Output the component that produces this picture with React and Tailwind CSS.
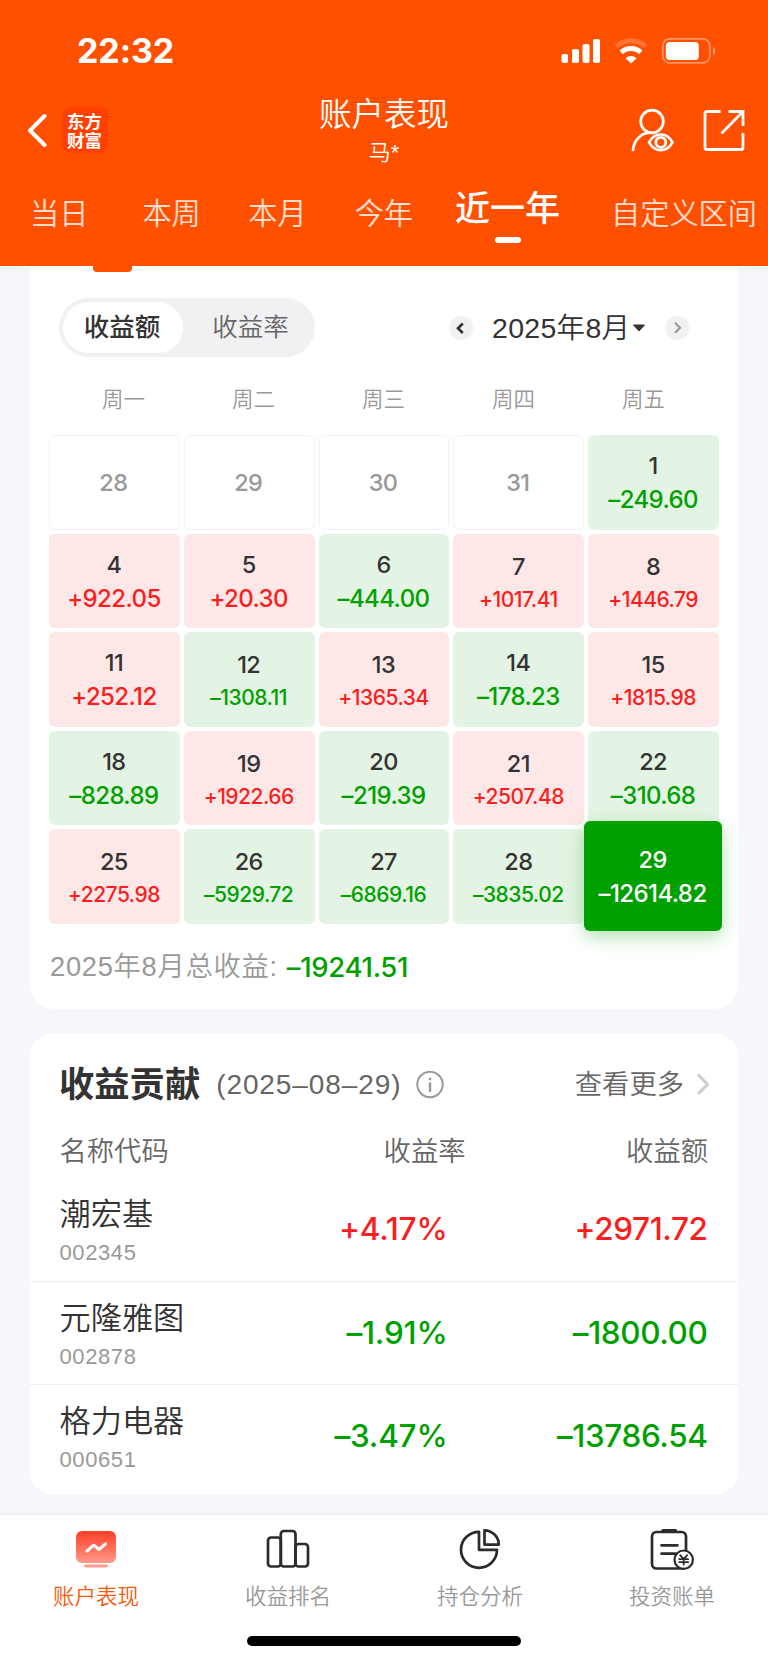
import clsx from 'clsx';

const periods = [
  { label: '当日', pad: 'ml-[30px]' },
  { label: '本周', pad: 'ml-[54px]' },
  { label: '本月', pad: 'ml-[47.500px]' },
  { label: '今年', pad: 'ml-[48px]' },
  { label: '近一年', pad: 'ml-[42px]', active: true },
  { label: '自定义区间', pad: 'ml-[51px]' },
];

const weekdays = ['周一', '周二', '周三', '周四', '周五'];

const days = [
  { day: 28 }, { day: 29 }, { day: 30 }, { day: 31 },
  { day: 1, value: -249.6 },
  { day: 4, value: 922.05 }, { day: 5, value: 20.3 }, { day: 6, value: -444 },
  { day: 7, value: 1017.41 }, { day: 8, value: 1446.79 },
  { day: 11, value: 252.12 }, { day: 12, value: -1308.11 }, { day: 13, value: 1365.34 },
  { day: 14, value: -178.23 }, { day: 15, value: 1815.98 },
  { day: 18, value: -828.89 }, { day: 19, value: 1922.66 }, { day: 20, value: -219.39 },
  { day: 21, value: 2507.48 }, { day: 22, value: -310.68 },
  { day: 25, value: 2275.98 }, { day: 26, value: -5929.72 }, { day: 27, value: -6869.16 },
  { day: 28, value: -3835.02 }, { day: 29, value: -12614.82, selected: true },
];

const stocks = [
  { name: '潮宏基', code: '002345', rate: 4.17, amount: 2971.72 },
  { name: '元隆雅图', code: '002878', rate: -1.91, amount: -1800 },
  { name: '格力电器', code: '000651', rate: -3.47, amount: -13786.54 },
];

const signed = (n) => `${n < 0 ? '–' : '+'}${Math.abs(n).toFixed(2)}`;

const StatusBar = () => (
  <div className="flex h-[102px] items-center pl-[77px] pr-[52px] text-white">
    <span className="font-['Inter'] text-[34px] font-bold leading-10 tracking-[-0.1px]">22:32</span>
    <svg className="ml-auto" width="155" height="26" viewBox="0 0 155 26" fill="#fff">
      <rect x="0.5" y="16" width="6.5" height="9" rx="2" />
      <rect x="11" y="11" width="7" height="14" rx="2" />
      <rect x="21.500" y="6" width="7" height="19" rx="2" />
      <rect x="32" y="1" width="7" height="24" rx="2" />
      <g fill="none" stroke="#fff" strokeWidth="5">
        <path d="M55.200 8.500a22 22 0 0 1 29.600 0" strokeOpacity="0.2" />
        <path d="M60.200 14.400a14.500 14.500 0 0 1 19.600 0" />
      </g>
      <path d="M64.500 20.200a8 8 0 0 1 11 0L70 25.600z" />
      <rect x="101.800" y="0.900" width="47" height="24" rx="7" fill="none" stroke="#fff" strokeOpacity="0.4" strokeWidth="1.700" />
      <rect x="104.800" y="4" width="33" height="18" rx="4" />
      <path d="M152 9v8c3-1.500 3-6.500 0-8z" fillOpacity="0.45" />
    </svg>
  </div>
);

const TitleBar = () => (
  <div className="grid h-[72px] grid-cols-[1fr_auto_1fr] text-white">
    <div className="flex items-start pl-[27px] pt-[5px]">
      <svg className="mt-[6px]" width="20" height="36" viewBox="0 0 20 36" fill="none" stroke="#fff" strokeWidth="4" strokeLinecap="round" strokeLinejoin="round">
        <path d="M17.500 3 3 17.500 17.500 32" />
      </svg>
      <div className="ml-[15px] flex h-[46px] w-[46px] items-center justify-center rounded-[9px] bg-[#ff4000]">
        <span className="w-[36px] break-all font-['Noto_Sans_CJK_SC',sans-serif] text-[17.500px] font-bold leading-[19.500px]">东方财富</span>
      </div>
    </div>
    <div className="flex flex-col items-center">
      <span className="mt-[-7px] text-[32.500px] leading-[40px]">账户表现</span>
      <span className="text-[22px] leading-[36px]">马*</span>
    </div>
    <div className="flex items-start justify-end pr-[23px] pt-[6px]">
      <svg width="44" height="46" viewBox="0 0 44 46" fill="none" stroke="#fff" strokeWidth="2.700" strokeLinecap="round">
        <circle cx="21" cy="13.500" r="11.300" />
        <path d="M2 42C3 31 11 24.500 20 24.700" />
        <path d="M18 34.300c6-10.400 17.500-10.400 23.500 0-6 10.400-17.500 10.400-23.500 0z" strokeLinejoin="round" />
        <circle cx="29.800" cy="34.300" r="5" />
      </svg>
      <svg className="ml-[28px]" width="42" height="44" viewBox="0 0 42 44" fill="none" stroke="#fff" strokeWidth="2.800" strokeLinecap="butt">
        <path d="M17.500 3.500H4a2 2 0 0 0-2 2v34a2 2 0 0 0 2 2h34a2 2 0 0 0 2-2V25" />
        <path d="M25.500 3.500H40V18M39.500 4 18.500 25.500" />
      </svg>
    </div>
  </div>
);

const PeriodTabs = () => (
  <div className="flex h-[92px] whitespace-nowrap text-white">
    {periods.map(({ label, pad, active }) => (
      <div key={label} className={clsx('flex shrink-0 flex-col items-center', pad)}>
        {active ? (
          <>
            <span className="mt-[11px] text-[35px] font-medium leading-[48px]">{label}</span>
            <span className="mt-1 h-1.5 w-[26px] rounded-full bg-white" />
          </>
        ) : (
          <span className="mt-4 text-[29.200px] leading-[48px] text-white/80">{label}</span>
        )}
      </div>
    ))}
  </div>
);

const CalendarToolbar = () => (
  <div className="flex h-[59px] items-center pl-[29px]">
    <div className="flex h-[59px] w-[256px] rounded-full bg-[#f1f1f4] p-1 text-[25.500px] leading-[51px]">
      <span className="h-[51px] w-[120px] rounded-full bg-white pr-0.5 text-center font-medium text-[#333]">收益额</span>
      <span className="flex-1 pl-[7px] text-center text-[#666]">收益率</span>
    </div>
    <svg className="ml-[134px]" width="24" height="24" viewBox="0 0 24 24" fill="none">
      <circle cx="12" cy="12" r="12" fill="#f1f1f4" />
      <path d="M13.800 7.500 9 12.300l4.800 4.700" stroke="#333" strokeWidth="2.600" />
    </svg>
    <span className="ml-[19px] text-[28.500px] leading-[56px] tracking-[0.3px] text-[#333]">2025年8月</span>
    <svg className="ml-auto" width="14" height="8" viewBox="0 0 14 8">
      <path d="M1.500 1h11L7 7z" fill="#333" stroke="#333" strokeLinejoin="round" />
    </svg>
    <svg className="ml-[19px] mr-[49px]" width="24" height="24" viewBox="0 0 24 24" fill="none">
      <circle cx="12" cy="12" r="12" fill="#f1f1f4" />
      <path d="m10 6.800 5 5-5 5" stroke="#999" strokeWidth="2.200" />
    </svg>
  </div>
);

const DayCell = ({ day, value, selected }) => {
  if (value === undefined) {
    return (
      <div className="flex items-center justify-center rounded-md border border-[#f3f3f3] pr-0.5 font-['Inter'] text-[23.500px] font-medium tracking-[-0.6px] text-[#999]">
        {day}
      </div>
    );
  }
  const small = Math.abs(value) >= 1000 && !selected;
  return (
    <div
      className={clsx(
        "flex flex-col items-center rounded-md pr-[1px] font-['Inter'] font-medium",
        selected && 'z-10 -mb-[7px] -ml-1 -mr-[3px] -mt-2 bg-[#00a000] pt-[24px] text-white shadow-[0_6px_18px_rgba(0,160,0,0.3)]',
        !selected && (value < 0 ? 'bg-[#e4f4e4]' : 'bg-[#fee7e7]'),
        !selected && (small ? 'pt-[18px]' : 'pt-4'),
      )}
    >
      <span className={clsx('text-[23.500px] leading-[30px] tracking-[-0.6px]', !selected && 'text-[#333]')}>{day}</span>
      <span
        className={clsx(
          'whitespace-nowrap',
          small ? 'mt-0.5 text-[21px] leading-[32px] tracking-[-0.5px]' : 'mt-[3px] text-[24px] leading-[32px] tracking-[-0.6px]',
          !selected && (value < 0 ? 'text-[#00a000]' : 'text-[#fa1e1e]'),
        )}
      >
        {signed(value)}
      </span>
    </div>
  );
};

const CalendarCard = () => (
  <section className="relative mx-[30px] h-[743px] rounded-b-[24px] bg-white pt-8">
    <span className="absolute left-[63px] top-0 h-1.5 w-[39px] rounded-b-[4px] bg-[#ff5000]" />
    <CalendarToolbar />
    <div className="ml-[28.500px] mt-[27px] grid w-[650px] grid-cols-5 text-center text-[21.500px] leading-8 text-[#999]">
      {weekdays.map((d) => (
        <span key={d}>{d}</span>
      ))}
    </div>
    <div className="ml-[19px] mt-[19px] grid h-[489px] w-[670px] grid-cols-5 grid-rows-5 gap-1">
      {days.map((d, i) => (
        <DayCell key={i} {...d} />
      ))}
    </div>
    <div className="ml-5 mt-[23px] flex items-center leading-10">
      <span className="text-[27.300px] tracking-[0.7px] text-[#999]">2025年8月总收益:</span>
      <span className="ml-[9px] font-['Inter'] text-[27.500px] font-medium tracking-[-0.3px] text-[#00a000]">–19241.51</span>
    </div>
  </section>
);

const StockRow = ({ name, code, rate, amount }) => {
  const color = amount < 0 ? 'text-[#00a000]' : 'text-[#fa1e1e]';
  return (
    <div className="flex h-[103.500px] items-start border-b border-[#eeeeee] pl-[29.500px] pr-[30.500px] last:border-b-0">
      <div className="flex w-[183px] flex-col pt-[17px]">
        <span className="text-[31.200px] leading-10 text-[#333]">{name}</span>
        <span className="text-[22px] leading-[35px] tracking-[0.6px] text-[#999]">{code}</span>
      </div>
      <span className={clsx("w-[205px] pt-[31px] text-right font-['Inter'] text-[31.500px] font-medium leading-10 tracking-[-0.2px]", color)}>
        {signed(rate)}%
      </span>
      <span className={clsx("flex-1 pt-[31px] text-right font-['Inter'] text-[31.500px] font-medium leading-10 tracking-[-0.4px]", color)}>
        {signed(amount)}
      </span>
    </div>
  );
};

const ContributionCard = () => (
  <section className="mx-[30px] mt-6 h-[462px] rounded-[24px] bg-white pt-[28px]">
    <div className="flex h-12 items-center pl-[29px] pr-7">
      <h2 className="text-[35.300px] font-bold leading-[48px] text-[#333]">收益贡献</h2>
      <span className="ml-[16px] text-[28px] tracking-[0.9px] text-[#666]">(2025–08–29)</span>
      <svg className="ml-[15px]" width="28" height="28" viewBox="0 0 28 28" fill="none" stroke="#999" strokeWidth="2">
        <circle cx="14" cy="13.500" r="12.700" />
        <path d="M14 11.500V21M14 6.700v2.600" strokeWidth="2.400" />
      </svg>
      <span className="ml-auto text-[27.300px] text-[#666]">查看更多</span>
      <svg className="ml-3" width="14" height="24" viewBox="0 0 14 24" fill="none" stroke="#ccc" strokeWidth="3">
        <path d="m2 1.500 9.500 10L2 21" />
      </svg>
    </div>
    <div className="mt-[23px] flex pl-[29.500px] pr-[30px] text-[27.300px] leading-10 text-[#666]">
      <span className="w-[200.500px]">名称代码</span>
      <span className="w-[205.500px] text-right">收益率</span>
      <span className="flex-1 text-right">收益额</span>
    </div>
    <div className="mt-[6px]">
      {stocks.map((s) => (
        <StockRow key={s.code} {...s} />
      ))}
    </div>
  </section>
);

const AccountIcon = () => (
  <svg width="44" height="44" viewBox="0 0 44 44" fill="none">
    <defs>
      <linearGradient id="screen" x1="0" y1="0" x2="0" y2="1">
        <stop offset="0" stopColor="#ff3d26" />
        <stop offset="1" stopColor="#ff9a8c" />
      </linearGradient>
    </defs>
    <rect x="2" y="4" width="40" height="32" rx="6" fill="url(#screen)" />
    <path d="m13 24 6.800-5.800 5.200 4.300 6.500-5.700" stroke="#fff" strokeWidth="3" strokeLinecap="round" strokeLinejoin="round" />
    <path d="M11.500 39h21" stroke="#ff9a8c" strokeWidth="2.800" strokeLinecap="round" />
  </svg>
);

const RankIcon = () => (
  <svg width="44" height="44" viewBox="0 0 44 44" fill="none" stroke="#2b2b2b" strokeWidth="2.700">
    <rect x="2" y="10.500" width="12.800" height="29" rx="3" />
    <rect x="14.800" y="4" width="14.700" height="35.500" rx="3" />
    <rect x="29.500" y="17" width="12.500" height="22.500" rx="3" />
  </svg>
);

const PieIcon = () => (
  <svg width="44" height="44" viewBox="0 0 44 44" fill="none" stroke="#2b2b2b" strokeWidth="2.700" strokeLinejoin="round">
    <path d="M21 4.800a18 18 0 1 0 18 18H21z" />
    <path d="M26.500 3.300a14.500 14.500 0 0 1 14.300 14.300H26.500z" />
  </svg>
);

const BillIcon = () => (
  <svg width="44" height="44" viewBox="0 0 44 44" fill="none" stroke="#2b2b2b" strokeWidth="2.700" strokeLinecap="round">
    <rect x="2" y="5" width="34" height="36.500" rx="4.500" />
    <path d="M13 3.800h12.500" strokeWidth="3.400" />
    <path d="M11.500 18.300h16M11.500 26.600h14" />
    <circle cx="33.700" cy="32.700" r="9.200" fill="#fff" strokeWidth="2.200" />
    <path d="m30.200 28.200 3.500 4 3.500-4M33.700 32.200v5.300M29.300 32.200h8.800M29.300 35.200h8.800" strokeWidth="1.800" />
  </svg>
);

const navItems = [
  { label: '账户表现', Icon: AccountIcon, active: true },
  { label: '收益排名', Icon: RankIcon },
  { label: '持仓分析', Icon: PieIcon },
  { label: '投资账单', Icon: BillIcon },
];

const BottomNav = () => (
  <nav className="mt-auto flex h-[150px] flex-col items-center border-t-2 border-[#eeeff1] bg-white">
    <div className="grid w-full grid-cols-4 pt-3">
      {navItems.map(({ label, Icon, active }) => (
        <div key={label} className="flex flex-col items-center">
          <Icon />
          <span className={clsx('mt-[10px] text-[21.500px] leading-8', active ? 'text-[#f55a0a]' : 'text-[#999]')}>{label}</span>
        </div>
      ))}
    </div>
    <div className="mt-[23px] h-2.5 w-[274px] rounded-full bg-black" />
  </nav>
);

const App = () => (
  <div className="flex h-[1663px] w-[768px] flex-col overflow-hidden bg-[#f6f7fa] font-['Liberation_Sans','Noto_Sans_CJK_SC',sans-serif] font-[350]">
    <header className="h-[266px] bg-[#ff5000]">
      <StatusBar />
      <TitleBar />
      <PeriodTabs />
    </header>
    <CalendarCard />
    <ContributionCard />
    <BottomNav />
  </div>
);

export default App;
